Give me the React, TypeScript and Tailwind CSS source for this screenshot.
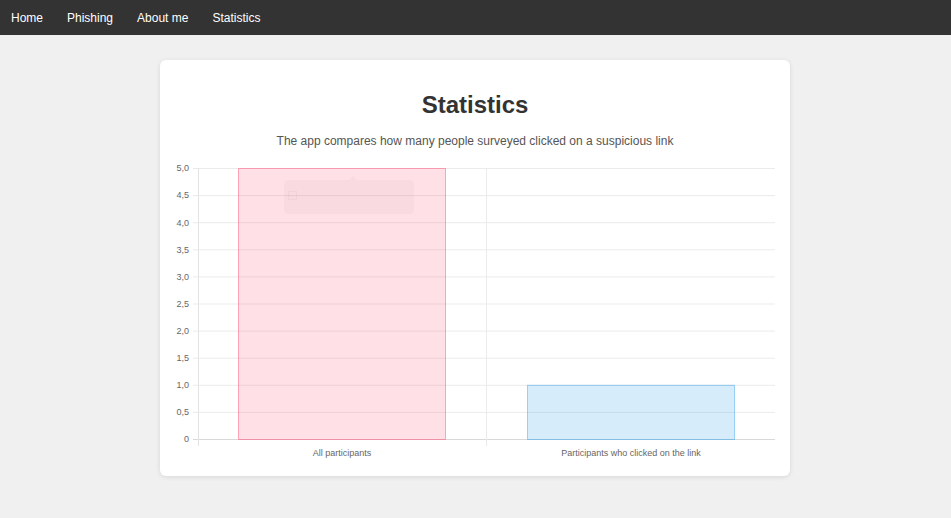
const navItems = ['Home', 'Phishing', 'About me', 'Statistics']

const yTicks = ['5,0', '4,5', '4,0', '3,5', '3,0', '2,5', '2,0', '1,5', '1,0', '0,5', '0']

const TOP = 19
const BOTTOM = 290
const STEP = (BOTTOM - TOP) / 10

function BarChart() {
  const y1 = BOTTOM - STEP * 2 // value 1
  return (
    <svg width={630} height={327} className="block" style={{ fontFamily: '"Liberation Sans", Arial, sans-serif' }}>
      {/* horizontal grid */}
      {yTicks.map((t, i) => {
        const y = TOP + i * STEP
        return (
          <g key={t}>
            <line x1={33} x2={615} y1={y + 0.5} y2={y + 0.5} stroke={i === 10 ? '#d9d9d9' : '#ebebeb'} />
            <text x={29} y={y + 1} fontSize={9} fill="#666" textAnchor="end" dominantBaseline="middle">
              {t}
            </text>
          </g>
        )
      })}
      {/* vertical grid */}
      <line x1={38.5} x2={38.5} y1={TOP} y2={297} stroke="#e3e3e3" />
      <line x1={326.5} x2={326.5} y1={TOP} y2={297} stroke="#ebebeb" />

      {/* bars */}
      <rect x={78.5} y={TOP + 0.5} width={207} height={BOTTOM - TOP} fill="rgba(255,99,132,0.2)" stroke="rgba(255,99,132,0.55)" />
      <rect x={367.5} y={y1 + 0.5} width={207} height={BOTTOM - y1} fill="rgba(54,162,235,0.2)" stroke="rgba(54,162,235,0.45)" />

      {/* fading tooltip */}
      <rect x={124} y={31} width={130} height={34} rx={4} fill="rgba(0,0,0,0.025)" />
      <path d="M189 31 L193 27 L197 31 Z" fill="rgba(0,0,0,0.025)" />
      <rect x={128.5} y={42.5} width={8} height={8} fill="none" stroke="rgba(0,0,0,0.03)" />

      <text x={182} y={305} fontSize={9} fill="#666" textAnchor="middle" dominantBaseline="middle">
        All participants
      </text>
      <text x={471} y={305} fontSize={9} fill="#666" textAnchor="middle" dominantBaseline="middle">
        Participants who clicked on the link
      </text>
    </svg>
  )
}

export default function App() {
  return (
    <div className="min-h-[518px] bg-[#f0f0f0] font-['Liberation_Sans',Arial,sans-serif]">
      <nav className="flex h-[35px] items-center bg-[#333333]">
        <div className="-ml-px flex">
          {navItems.map((item) => (
            <a key={item} href="#" className="px-3 text-[12px] text-white">
              {item}
            </a>
          ))}
        </div>
      </nav>

      <div className="mt-[25px] ml-[160px] h-[416px] w-[630px] rounded-md bg-white pt-[29px] shadow-[0_1px_5px_rgba(0,0,0,0.1)]">
        <h2 className="text-center text-[24px] leading-8 font-bold text-[#333333]">Statistics</h2>
        <p className="mt-[12px] text-center text-[12px] leading-4 text-[#555555]">
          The app compares how many people surveyed clicked on a suspicious link
        </p>
        <BarChart />
      </div>
    </div>
  )
}
